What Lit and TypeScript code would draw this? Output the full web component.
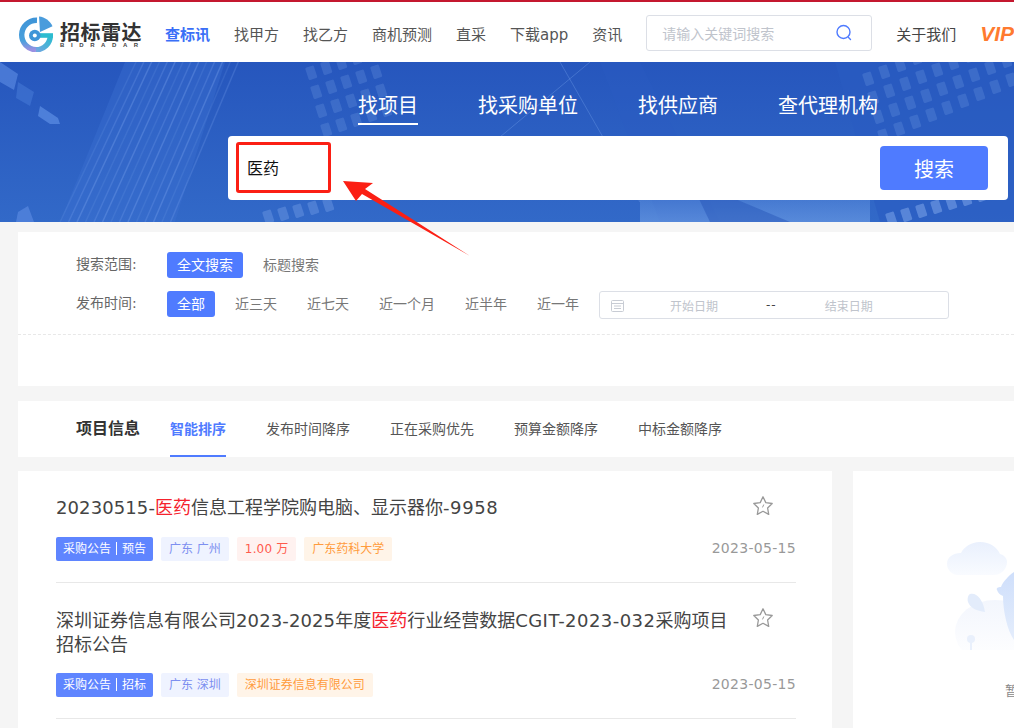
import { LitElement, html, css, svg } from "lit";
import { customElement } from "lit/decorators.js";

const navItems = ["查标讯", "找甲方", "找乙方", "商机预测", "直采", "下载app", "资讯"];
const heroTabs = ["找项目", "找采购单位", "找供应商", "查代理机构"];
const timeOptions = ["全部", "近三天", "近七天", "近一个月", "近半年", "近一年"];
const sorts = ["智能排序", "发布时间降序", "正在采购优先", "预算金额降序", "中标金额降序"];

const streaks = () => {
  const out = [];
  for (let i = 0; i < 14; i++) {
    const x = 60 + i * 8.5;
    out.push(svg`<line x1=${x} y1="160" x2=${x + 76} y2=${i * -1.5} stroke="#7aa5ee" stroke-opacity=${0.16 + (i % 3) * 0.09} stroke-width="1.5"/>`);
  }
  return out;
};

const windows = (ox: number, oy: number, cols: number, rows: number, dx: number, dy: number, sx: number, sy: number, op: number) => {
  const out = [];
  for (let r = 0; r < rows; r++) {
    for (let c = 0; c < cols; c++) {
      const x = ox + c * dx + r * sx;
      const y = oy + c * dy + r * sy;
      out.push(svg`<rect x=${x} y=${y} width="9" height="13" rx="1.5" fill="#8db3f2" fill-opacity=${op} transform="rotate(-18 ${x} ${y})"/>`);
    }
  }
  return out;
};

const heroArt = svg`
  <svg class="art" width="1014" height="160" viewBox="0 0 1014 160" aria-hidden="true">
    <defs>
      <linearGradient id="sky" x1="0" y1="0" x2="0" y2="1">
        <stop offset="0" stop-color="#2656bd"/><stop offset="1" stop-color="#3269c8"/>
      </linearGradient>
      <linearGradient id="glow" x1="0" y1="0" x2="0" y2="1">
        <stop offset="0" stop-color="#6a9ae3" stop-opacity="0"/><stop offset="1" stop-color="#6a9ae3" stop-opacity=".95"/>
      </linearGradient>
    </defs>
    <rect width="1014" height="160" fill="url(#sky)"/>
    <polygon points="125,0 225,0 175,160 60,160" fill="#3c71d3" fill-opacity=".4"/>
    ${streaks()}
    <polygon points="0,0 18,12 14,28 0,20" fill="#5a8be2" fill-opacity=".65"/>
    <polygon points="40,44 58,56 60,62 50,62 38,54" fill="#5a8be2" fill-opacity=".75"/>
    <polygon points="18,20 34,30 30,44 16,36" fill="#4a7dd9" fill-opacity=".5"/>
    <polygon points="18,150 28,144 34,160 16,160" fill="#5a8be2" fill-opacity=".65"/>
    ${windows(305, 6, 5, 4, 15, -5, 5, 19, 0.2)}
    ${windows(262, 150, 5, 1, 15, -3, 0, 0, 0.3)}
    <polygon points="540,0 600,0 660,160 720,160 640,0" fill="#2a5cc4" fill-opacity=".35"/>
    <line x1="470" y1="100" x2="590" y2="0" stroke="#6d9ae6" stroke-opacity=".4"/>
    <line x1="560" y1="0" x2="640" y2="140" stroke="#6d9ae6" stroke-opacity=".4"/>
    <rect x="640" y="110" width="230" height="50" fill="url(#glow)" fill-opacity=".7"/>
    <polygon points="690,118 790,160 710,160" fill="#2452b5" fill-opacity=".45"/>
    <polygon points="835,0 1014,0 1014,160 880,160" fill="#2a5cc2" fill-opacity=".6"/>
    ${windows(862, 12, 10, 4, 16, -7, 5, 19, 0.2)}
    ${windows(885, 152, 7, 1, 15, -4, 0, 0, 0.45)}
  </svg>`;

const star = html`<svg class="star" width="22" height="22" viewBox="0 0 22 22" fill="none" stroke="#999" stroke-width="1.3" stroke-linejoin="round" aria-hidden="true">
  <path d="M11 1.8 13.8 7.6 20.2 8.5 15.6 13 16.7 19.4 11 16.3 5.3 19.4 6.4 13 1.8 8.5 8.2 7.6Z"/>
  <path d="M11.8 9.5 10.5 12.4" stroke-width="1"/>
</svg>`;

const logo = html`<svg class="logo" width="36" height="36" viewBox="0 0 36 36" aria-hidden="true">
  <defs>
    <linearGradient id="lv" x1="0" y1="0" x2="0" y2="1">
      <stop offset="0" stop-color="#3f95d8"/><stop offset=".7" stop-color="#4aa0dc"/><stop offset="1" stop-color="#9a90e2"/>
    </linearGradient>
    <linearGradient id="lg" x1="0" y1="1" x2="1" y2="0">
      <stop offset="0" stop-color="#6fa6e0"/><stop offset="1" stop-color="#2cbcd0"/>
    </linearGradient>
  </defs>
  <path d="M19 4.200A14.300 14.300 0 0 0 18 33.800" fill="none" stroke="url(#lv)" stroke-width="5.400"/>
  <path d="M18 33.800A14.300 14.300 0 0 0 32.300 19.500" fill="none" stroke="url(#lg)" stroke-width="5.400"/>
  <path d="M35 19.500H22" fill="none" stroke="#2cbcd0" stroke-width="4.600"/>
  <path d="M21 .6C27 1.200 32 5 34.500 10.200L22 16Z" fill="#4a9cdc"/>
  <circle cx="16.800" cy="19.500" r="5.800" fill="#3f95d8"/>
  <circle cx="16.800" cy="19.500" r="2" fill="#fff"/>
</svg>`;

const emptyArt = html`<svg class="empty-art" width="161" height="120" viewBox="0 0 161 120" aria-hidden="true">
  <defs>
    <linearGradient id="cloud" x1="0" y1="0" x2="0" y2="1">
      <stop offset="0" stop-color="#e9f0fd"/><stop offset="1" stop-color="#f9fbff"/>
    </linearGradient>
    <linearGradient id="hill" x1="0" y1="0" x2="0" y2="1">
      <stop offset="0" stop-color="#f3f6fd"/><stop offset="1" stop-color="#ffffff"/>
    </linearGradient>
    <linearGradient id="body" x1="0" y1="0" x2="0" y2="1">
      <stop offset="0" stop-color="#cfdffb"/><stop offset="1" stop-color="#e4edfc"/>
    </linearGradient>
  </defs>
  <g transform="translate(-853 -530)">
    <ellipse cx="995" cy="632" rx="40" ry="32" fill="url(#hill)"/>
    <path d="M947 564c0-7 6-11 14-11 3-6 10-11 19-11 10 0 17 5 20 12 4 1 7 4 7 8 0 7-6 13-13 13h-36c-6 0-11-5-11-11Z" fill="url(#cloud)"/>
    <path d="M970 594c6-2 13 5 15 18-8-1-15-4-17-10-1-3 0-7 2-8Z" fill="#e3ecfb"/>
    <circle cx="971" cy="639" r="4" fill="#e9f0fc"/>
    <rect x="970" y="640" width="2" height="14" fill="#e9f0fc"/>
    <path d="M1014 572c-6 4-11 10-13 15-3 0-5 1-4 3 1 3 3 5 6 6 0 14 4 34 11 44Z" fill="url(#body)"/>
  </g>
</svg>`;

interface Item {
  title: unknown;
  kind: string;
  region: string;
  money?: string;
  org: string;
  date: string;
}

const hit = html`<em>医药</em>`;
const items: Item[] = [
  { title: html`<span class="n1">20230515-</span>${hit}信息工程学院购电脑、显示器你<span class="n4">-9958</span>`, kind: "预告", region: "广东 广州", money: "1.00 万", org: "广东药科大学", date: "2023-05-15" },
  { title: html`深圳证券信息有限公司<span class="n2">2023-2025</span>年度${hit}行业经营数据<span class="n3">CGIT-2023-032</span>采购项目招标公告`, kind: "招标", region: "广东 深圳", org: "深圳证券信息有限公司", date: "2023-05-15" },
];

@customElement("app-root")
export class AppRoot extends LitElement {
  static styles = css`
    :host {
      display: block;
      width: 1014px;
      height: 728px;
      overflow: hidden;
      position: relative;
      background: #f5f5f5;
      font-family: "DejaVu Sans", "Noto Sans CJK SC", sans-serif;
      color: #333;
    }
    * { box-sizing: border-box; }
    header {
      height: 62px;
      background: #fff;
      border-top: 2px solid #c4182f;
      display: flex;
      align-items: center;
      padding: 2px 0 0 18px;
      white-space: nowrap;
    }
    .brand { display: flex; align-items: center; gap: 6px; width: 147px; flex: none; }
    .logo { margin-top: 2px; flex: none; }
    .brand-text { display: flex; flex-direction: column; padding-top: 4px; }
    .brand-name { font: 700 20px/19px "Noto Sans CJK SC", sans-serif; color: #333; letter-spacing: .5px; }
    .brand-sub { font: 700 6px/8px "Liberation Sans", sans-serif; color: #444; letter-spacing: 6.6px; }
    nav { display: flex; gap: 24px; font-size: 15px; color: #555; }
    nav .on { color: #3a6ff7; font-weight: 700; }
    .top-search {
      margin-left: 24px;
      width: 226px;
      height: 36px;
      border: 1px solid #dcdfe6;
      border-radius: 3px;
      display: flex;
      align-items: center;
      justify-content: space-between;
      padding: 0 18px 0 15px;
      font-size: 14px;
      color: #c0c4cc;
    }
    .about { margin-left: 24px; font-size: 15px; color: #444; }
    .vip {
      margin-left: 24px;
      font: italic 900 21px/1 "Liberation Sans", sans-serif;
      color: #ff7a2f;
    }
    .hero {
      height: 160px;
      position: relative;
      padding-top: 26px;
      overflow: hidden;
      background: #2a5fc4;
    }
    .art { position: absolute; left: 0; top: 0; }
    .hero-tabs {
      position: relative;
      display: flex;
      gap: 60px;
      margin-left: 358px;
      color: #fff;
      font-size: 20px;
      line-height: 37px;
    }
    .hero-tabs span { display: block; height: 37px; }
    .hero-tabs .on { border-bottom: 2px solid #fff; }
    .hero-box {
      position: relative;
      margin: 11px 0 0 228px;
      width: 780px;
      height: 64px;
      background: #fff;
      border-radius: 4px;
      display: flex;
      align-items: center;
      justify-content: space-between;
      padding: 0 20px;
      color: #111;
      font-size: 16px;
    }
    .hero-box .q { padding-bottom: 2px; margin-left: -1px; }
    .hero-btn {
      width: 108px;
      height: 44px;
      background: #4f7bff;
      border-radius: 4px;
      color: #fff;
      font-size: 20px;
      display: flex;
      align-items: center;
      justify-content: center;
    }
    .filters {
      margin: 10px 0 0 18px;
      height: 154px;
      background: #fff;
      padding-top: 20px;
      font-size: 14px;
      color: #666;
    }
    .row { display: flex; align-items: flex-start; height: 26px; padding-left: 58px; }
    .row + .row { margin-top: 13px; }
    .row label { width: 91px; color: #666; line-height: 25px; }
    .pill { padding: 0 10px; height: 26px; line-height: 26px; border-radius: 3px; margin-right: 10px; color: #777; white-space: nowrap; }
    .pill.on { background: #4f7bff; color: #fff; }
    .dates {
      width: 350px;
      height: 28px;
      border: 1px solid #dcdfe6;
      border-radius: 3px;
      display: flex;
      align-items: center;
      padding-left: 11px;
      font-size: 12px;
      color: #c0c4cc;
      flex: none;
    }
    .dates .s { margin-left: 46px; }
    .dates .sep { margin-left: 48px; color: #444; letter-spacing: 1px; }
    .dates .e { margin-left: 48px; }
    .dash { border-top: 1px dashed #e8e8e8; margin-top: 17px; }
    .sortbar {
      margin: 15px 0 0 18px;
      height: 56px;
      background: #fff;
      display: flex;
      padding-left: 58px;
      align-items: stretch;
      font-size: 14px;
      color: #555;
    }
    .sortbar h2 { margin: 0 30px 0 0; font-size: 16px; font-weight: 700; line-height: 55px; color: #333; }
    .sorts { display: flex; gap: 40px; }
    .sorts span { line-height: 56px; height: 56px; white-space: nowrap; }
    .sorts .on { color: #4f7bff; font-weight: 700; border-bottom: 2px solid #4f7bff; }
    .main { margin: 14px 0 0 18px; display: flex; gap: 21px; align-items: flex-start; }
    .list { width: 814px; background: #fff; padding: 0 36px 0 38px; height: 300px; flex: none; }
    .item { padding-top: 25px; height: 136px; border-bottom: 1px solid #e8e8e8; display: flex; flex-direction: column; position: relative; }
    .item:first-child { height: 112px; padding-top: 24px; }
    .item:first-child .meta { margin-top: 17px; }
    .title { font-size: 18px; line-height: 24px; width: 680px; color: #444; margin-top: 1px; }
    .title em { font-style: normal; color: #f5222d; }
    .n1 { letter-spacing: .1px; }
    .n2 { letter-spacing: .12px; }
    .n3 { letter-spacing: .45px; }
    .n4 { letter-spacing: .6px; }
    .star { position: absolute; right: 22px; top: 24px; }
    .meta { display: flex; align-items: center; gap: 8px; margin-top: 16px; }
    .tag { height: 24px; line-height: 24px; padding: 0 8px; border-radius: 2px; font-size: 12px; white-space: nowrap; }
    .tag.kind { background: #5f85ff; color: #fff; padding: 0 7px; }
    .tag.kind i { font-style: normal; display: inline-block; width: 1px; height: 13px; background: #fff; margin: 0 5px; vertical-align: -2px; }
    .tag.region { background: #eff3ff; color: #7d8ff0; }
    .tag.money { background: #fff2f0; color: #ff5b4d; letter-spacing: .15px; }
    .tag.org { background: #fff4e8; color: #ff9c3d; }
    .date { margin-left: auto; font-size: 14px; color: #999; letter-spacing: .3px; padding-bottom: 2px; }
    .aside { width: 300px; height: 300px; background: #fff; flex: none; position: relative; padding-top: 59px; }
    .empty-art { display: block; }
    .empty-text { margin: 30px 0 0 152px; font-size: 13px; color: #888; white-space: nowrap; }
    .mark {
      position: absolute;
      left: 236px;
      top: 142px;
      width: 95px;
      height: 51px;
      border: 3px solid #fb1f14;
      border-radius: 3px;
      pointer-events: none;
    }
    .arrow { position: absolute; left: 335px; top: 172px; pointer-events: none; }
  `;

  render() {
    return html`
      <header>
        <div class="brand">
          ${logo}
          <div class="brand-text">
            <div class="brand-name">招标雷达</div>
            <div class="brand-sub">BIDRADAR</div>
          </div>
        </div>
        <nav>${navItems.map((n, i) => html`<span class=${i === 0 ? "on" : ""}>${n}</span>`)}</nav>
        <div class="top-search">
          <span>请输入关键词搜索</span>
          <svg width="18" height="18" viewBox="0 0 18 18" fill="none" stroke="#4f7bff" stroke-width="1.4" stroke-linecap="round" aria-hidden="true"><circle cx="8.500" cy="8" r="6.500"/><path d="M13.500 13.500 15.500 15.500"/></svg>
        </div>
        <span class="about">关于我们</span>
        <span class="vip">VIP</span>
      </header>

      <section class="hero">
        ${heroArt}
        <div class="hero-tabs">${heroTabs.map((t, i) => html`<span class=${i === 0 ? "on" : ""}>${t}</span>`)}</div>
        <div class="hero-box">
          <span class="q">医药</span>
          <div class="hero-btn">搜索</div>
        </div>
      </section>

      <section class="filters">
        <div class="row">
          <label>搜索范围:</label>
          <span class="pill on">全文搜索</span>
          <span class="pill">标题搜索</span>
        </div>
        <div class="row">
          <label>发布时间:</label>
          ${timeOptions.map((t, i) => html`<span class="pill ${i === 0 ? "on" : ""}">${t}</span>`)}
          <div class="dates">
            <svg width="13" height="13" viewBox="0 0 13 13" fill="none" stroke="#c8ccd4" aria-hidden="true"><rect x=".5" y="1.500" width="12" height="11" rx="1"/><path d="M.5 4.500H12.500M3 7H10M3 9.500H10"/></svg>
            <span class="s">开始日期</span>
            <span class="sep">--</span>
            <span class="e">结束日期</span>
          </div>
        </div>
        <div class="dash"></div>
      </section>

      <section class="sortbar">
        <h2>项目信息</h2>
        <div class="sorts">${sorts.map((s, i) => html`<span class=${i === 0 ? "on" : ""}>${s}</span>`)}</div>
      </section>

      <div class="main">
        <section class="list">
          ${items.map((it) => html`
            <article class="item">
              <div class="title">${it.title}</div>
              ${star}
              <div class="meta">
                <span class="tag kind">采购公告<i></i>${it.kind}</span>
                <span class="tag region">${it.region}</span>
                ${it.money ? html`<span class="tag money">${it.money}</span>` : ""}
                <span class="tag org">${it.org}</span>
                <span class="date">${it.date}</span>
              </div>
            </article>`)}
        </section>
        <aside class="aside">
          ${emptyArt}
          <div class="empty-text">暂无数据</div>
        </aside>
      </div>

      <div class="mark"></div>
      <svg class="arrow" width="140" height="90" viewBox="335 172 140 90" aria-hidden="true">
        <polygon points="343,181 373,183 365,189 470,256 362,194 356,201" fill="#fb1f14"/>
      </svg>
    `;
  }
}
